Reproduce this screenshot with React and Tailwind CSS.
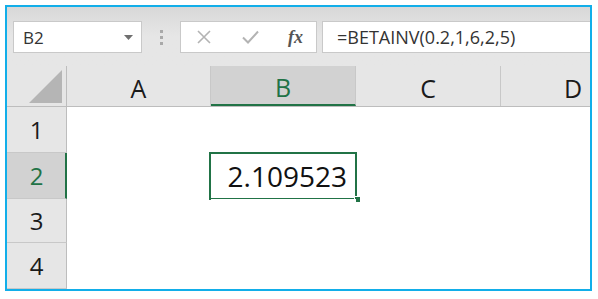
import React from 'react';

const cols = [
  { label: 'A', w: 'w-[144px]' },
  { label: 'B', w: 'w-[145px]', active: true },
  { label: 'C', w: 'w-[145px]' },
  { label: 'D', w: 'w-[145px]' },
];

const rows = [
  { n: 1, h: 'h-[46px]' },
  { n: 2, h: 'h-[46px]', active: true },
  { n: 3, h: 'h-[44px]' },
  { n: 4, h: 'h-[46px]' },
];

export default function App() {
  return (
    <div className="w-[598px] h-[299px] bg-white p-[5px]" style={{ fontFamily: '"Open Sans", "Noto Sans", sans-serif' }}>
      <div className="w-[587px] h-[286px] border-2 border-[#12aee9] overflow-hidden flex flex-col">

        {/* Formula toolbar */}
        <div className="h-[59px] shrink-0 bg-linear-to-b from-[#d8d8d8] via-[#e6e6e6] to-[#e6e6e6] flex pt-[14px] pl-[6px]">
          <div className="w-[129px] h-[32px] bg-white border border-[#c9c9c9] flex items-center pl-[9px] pr-[8px]">
            <span className="text-[17px] text-[#333] flex-1 leading-none">B2</span>
            <svg width="9" height="5" viewBox="0 0 9 5"><path d="M0 0h9L4.5 5z" fill="#6f6f6f" /></svg>
          </div>
          <div className="w-[38px] h-[32px] flex flex-col items-center justify-center gap-[3px]">
            <span className="w-[3px] h-[3px] bg-[#a9a9a9]" />
            <span className="w-[3px] h-[3px] bg-[#a9a9a9]" />
            <span className="w-[3px] h-[3px] bg-[#a9a9a9]" />
          </div>
          <div className="w-[137px] h-[32px] bg-white border border-[#c9c9c9] flex items-center pl-[16px]">
            <svg width="14" height="14" viewBox="0 0 14 14" className="mr-[31px]">
              <path d="M1 1l12 12M13 1L1 13" stroke="#b3b3b3" strokeWidth="1.6" />
            </svg>
            <svg width="17" height="14" viewBox="0 0 17 14" className="mr-[29px]">
              <path d="M1 7.5l5 5L16 1.5" stroke="#b3b3b3" strokeWidth="2" fill="none" />
            </svg>
            <span className="text-[18px] italic font-semibold text-[#555] leading-none" style={{ fontFamily: '"Liberation Serif", serif' }}>fx</span>
          </div>
          <div className="w-[5px]" />
          <div className="flex-1 h-[32px] bg-white border border-r-0 border-[#c9c9c9] flex items-center pl-[14px]">
            <span className="text-[18px] text-[#333] leading-none">=BETAINV(0.2,1,6,2,5)</span>
          </div>
        </div>

        {/* Column headers */}
        <div className="h-[41px] shrink-0 flex bg-[#e6e6e6] border-b border-[#bdbdbd] overflow-hidden">
          <div className="w-[60px] shrink-0 border-r border-[#bdbdbd] relative">
            <svg width="34" height="34" viewBox="0 0 34 34" className="absolute left-[22px] top-[4px]">
              <path d="M33 0V33H0z" fill="#b5b5b5" />
            </svg>
          </div>
          {cols.map(c => (
            <div key={c.label}
              className={`${c.w} shrink-0 flex items-center justify-center pt-[4px] text-[25px] leading-none
                ${c.active ? 'bg-[#d2d2d2] text-[#217346] border-b-2 border-[#217346] border-r border-r-[#c8c8c8]' : 'text-[#1a1a1a] border-r border-[#c8c8c8]'}`}>
              {c.label}
            </div>
          ))}
        </div>

        {/* Rows */}
        {rows.map(r => (
          <div key={r.n} className={`${r.h} shrink-0 flex`}>
            <div className={`w-[60px] shrink-0 flex items-center justify-center text-[24px] leading-none border-b border-[#c8c8c8]
              ${r.active ? 'bg-[#d2d2d2] text-[#217346] border-r-2 border-r-[#217346]' : 'bg-[#e6e6e6] text-[#1a1a1a] border-r border-r-[#bdbdbd]'}`}>
              <span className={r.active ? 'pl-[1px]' : ''}>{r.n}</span>
            </div>
            <div className="w-[144px] shrink-0 bg-white" />
            <div className="w-[145px] shrink-0 bg-white relative">
              {r.active && (
                <>
                  <div className="absolute -left-[2px] -top-[1px] -right-[1px] -bottom-[1px] border-2 border-[#217346] flex items-center justify-end pr-[8px]">
                    <span className="text-[28px] text-[#111] leading-none">2.109523</span>
                  </div>
                  <div className="absolute -right-[5px] -bottom-[4px] w-[7px] h-[7px] bg-[#217346] border border-white" />
                </>
              )}
            </div>
            <div className="flex-1 bg-white" />
          </div>
        ))}
      </div>
    </div>
  );
}
